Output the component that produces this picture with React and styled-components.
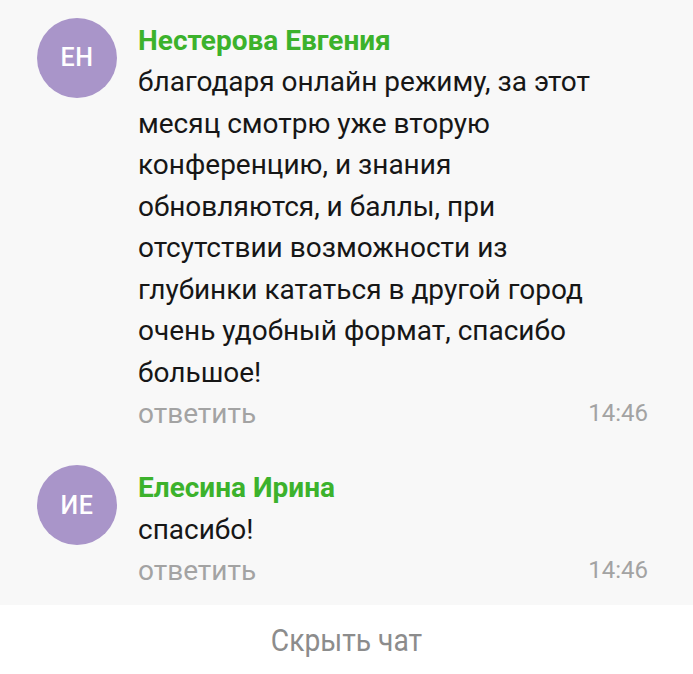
import React from 'react'
import styled, {createGlobalStyle} from 'styled-components'

const GlobalStyle = createGlobalStyle`
	html, body {
		margin: 0;
		padding: 0;
		background: #ffffff;
	}
	body {
		font-family: Roboto, "Noto Sans", sans-serif;
		-webkit-font-smoothing: antialiased;
	}
`;

const Page = styled.div`
	width: 693px;
	height: 674px;
	display: flex;
	flex-direction: column;
	overflow: hidden;
`;

const Feed = styled.div`
	background: #f8f8f8;
	display: flex;
	flex-direction: column;
`;

const Comment = styled.div`
	display: flex;
	flex-direction: row;
	align-items: flex-start;
	padding: 19.5px 45px 13px 37px;
`;

const Avatar = styled.div`
	flex: none;
	width: 80px;
	height: 80px;
	margin-top: -2px;
	border-radius: 50%;
	background: #a995c9;
	color: #ffffff;
	display: flex;
	justify-content: center;
	align-items: center;
	font-size: 25px;
	font-weight: 500;
	letter-spacing: 0.5px;
`;

const Body = styled.div`
	flex: 1;
	display: flex;
	flex-direction: column;
	margin-left: 21px;
`;

const Name = styled.div`
	color: #3cb22c;
	font-size: 28px;
	font-weight: 700;
	line-height: 41.5px;
`;

const Text = styled.div`
	color: #161616;
	font-size: 28px;
	line-height: 41.5px;
`;

const Footer = styled.div`
	display: flex;
	justify-content: space-between;
	align-items: center;
	height: 41.5px;
	color: #a3a3a3;
	font-size: 28px;
	line-height: 41.5px;
`;

const Time = styled.span`
	font-size: 24px;
`;

const Spacer = styled.div`
	flex: 1;
`;

const HideButton = styled.div`
	height: 71px;
	background: #ffffff;
	display: flex;
	justify-content: center;
	align-items: center;
	color: #8c8c8c;
	font-size: 31px;
	padding-top: 3px;
	box-sizing: border-box;
	transform: scaleX(0.91);
`;

const comments = [
	{
		initials: 'ЕН',
		name: 'Нестерова Евгения',
		lines: [
			'благодаря онлайн режиму, за этот',
			'месяц смотрю уже вторую',
			'конференцию, и знания',
			'обновляются, и баллы, при',
			'отсутствии возможности из',
			'глубинки кататься в другой город',
			'очень удобный формат, спасибо',
			'большое!',
		],
		time: '14:46',
	},
	{
		initials: 'ИЕ',
		name: 'Елесина Ирина',
		lines: ['спасибо!'],
		time: '14:46',
	},
];

export default function App() {
	return (
		<Page>
			<GlobalStyle/>
			<Feed>
				{comments.map((c, i) => (
					<Comment key={i}>
						<Avatar>{c.initials}</Avatar>
						<Body>
							<Name>{c.name}</Name>
							<Text>
								{c.lines.map((l, j) => <div key={j}>{l}</div>)}
							</Text>
							<Footer>
								<span>ответить</span>
								<Time>{c.time}</Time>
							</Footer>
						</Body>
					</Comment>
				))}
			</Feed>
			<HideButton>Скрыть чат</HideButton>
			<Spacer/>
		</Page>
	)
}
